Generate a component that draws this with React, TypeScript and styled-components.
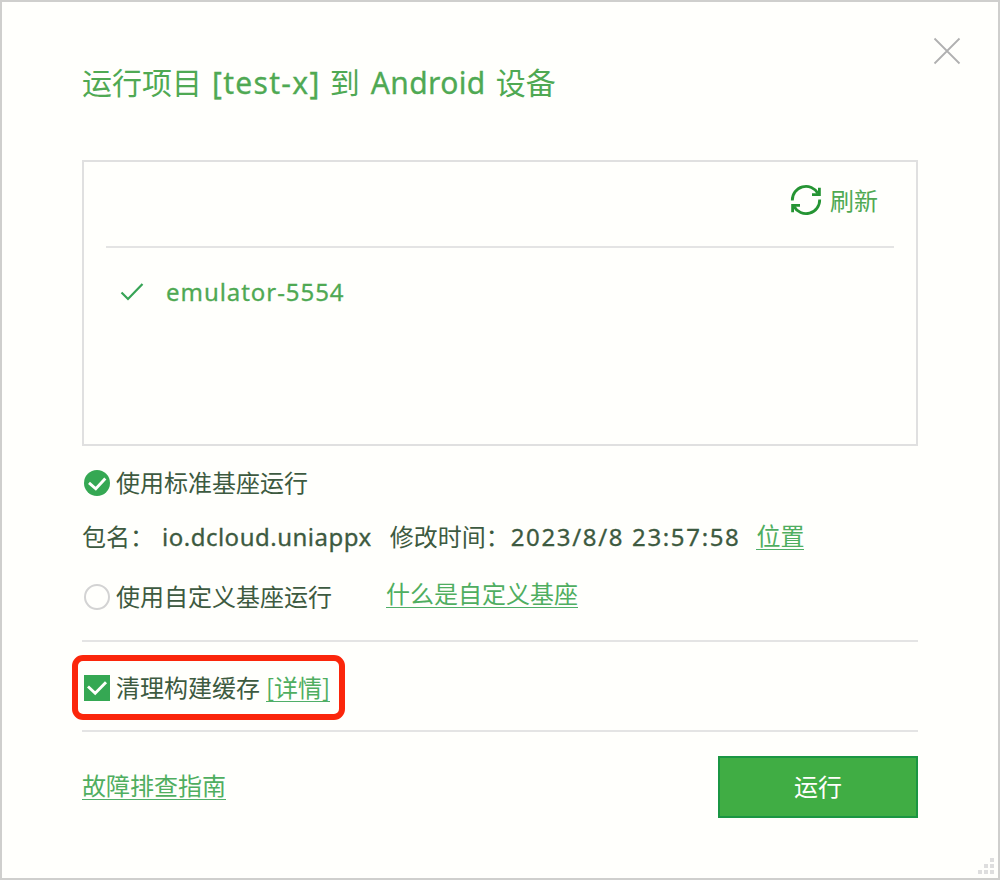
import React from "react";
import styled, { createGlobalStyle } from "styled-components";

const Global = createGlobalStyle`
  * { box-sizing: border-box; }
  body { margin: 0; background: #fffffc; }
`;

const Dialog = styled.div`
  position: relative;
  width: 1000px;
  height: 880px;
  padding: 57px 80px 0;
  border: 2px solid #cfcfcd;
  background: #fffffc;
  color: #3d5a40;
  font: 24px/34px "Noto Sans CJK SC", sans-serif;
  white-space: nowrap;
`;

const Latin = styled.span<{ $size?: number; $track?: number; $gap?: number; $drop?: number }>`
  font-family: "Noto Sans", "Noto Sans CJK SC", sans-serif;
  font-size: ${(p) => p.$size ?? 24}px;
  letter-spacing: ${(p) => p.$track ?? 0}px;
  margin-left: ${(p) => p.$gap ?? 0}px;
  margin-top: ${(p) => p.$drop ?? 0}px;
  -webkit-text-stroke: 0.3px currentColor;
`;

const Title = styled.h1`
  display: flex;
  align-items: baseline;
  height: 44px;
  margin: 0;
  font-size: 30px;
  line-height: 44px;
  font-weight: 400;
  color: #4fa953;
`;

const Word = styled.span<{ $gap: number }>`
  margin-left: ${(p) => p.$gap}px;
`;

const CloseButton = styled.button`
  position: absolute;
  top: 35px;
  right: 37px;
  width: 28px;
  height: 28px;
  padding: 0;
  border: 0;
  background: none;
  svg { display: block; }
`;

const DeviceBox = styled.section`
  height: 286px;
  margin-top: 57px;
  padding: 0 22px;
  border: 2px solid #e0e0e0;
`;

const Toolbar = styled.div`
  display: flex;
  justify-content: flex-end;
  align-items: center;
  height: 86px;
  padding: 0 16px 8px 0;
  border-bottom: 2px solid #e4e4e4;
  color: #4fa953;
`;

const Refresh = styled.button`
  display: flex;
  align-items: center;
  gap: 8px;
  padding: 0;
  border: 0;
  background: none;
  color: inherit;
  font: inherit;
`;

const Device = styled.div`
  display: flex;
  align-items: center;
  height: 88px;
  padding-left: 14px;
  color: #4fa953;
`;

const Row = styled.div<{ $height: number; $top?: number }>`
  display: flex;
  align-items: center;
  height: ${(p) => p.$height}px;
  margin-top: ${(p) => p.$top ?? 0}px;
`;

const Mark = styled.span<{ $drop?: number }>`
  display: flex;
  width: 26px;
  height: 26px;
  margin: ${(p) => p.$drop ?? 0}px 6px 0 2px;
`;

const Link = styled.a<{ $gap?: number; $lift?: number; $drop?: number }>`
  height: 28px;
  margin-left: ${(p) => p.$gap ?? 0}px;
  margin-top: ${(p) => p.$drop ?? 0}px;
  margin-bottom: ${(p) => p.$lift ?? 0}px;
  border-bottom: 1px solid #4fae68;
  line-height: 26px;
  color: #4fae60;
`;

const CacheSection = styled.div`
  display: flex;
  align-items: center;
  height: 92px;
  margin-top: 26px;
  border-top: 2px solid #e4e4e4;
  border-bottom: 2px solid #e4e4e4;
`;

const Highlight = styled.div`
  display: flex;
  align-items: center;
  width: 273px;
  height: 65px;
  margin: 2px 0 0 -10px;
  padding-left: 4px;
  border: 6px solid #fb260b;
  border-radius: 11px;
`;

const Footer = styled.footer`
  display: flex;
  justify-content: space-between;
  align-items: center;
  height: 62px;
  margin-top: 24px;
`;

const RunButton = styled.button`
  width: 200px;
  height: 62px;
  padding: 0 0 2px;
  border: 2px solid #1b9643;
  background: #40ad44;
  color: #fffffc;
  font: inherit;
`;

const Grip = styled.svg`
  position: absolute;
  right: 4px;
  bottom: 4px;
`;

function CheckGlyph({ round }: { round?: boolean }) {
  return (
    <svg width="26" height="26" viewBox="0 0 26 26">
      {round ? <circle cx="13" cy="13" r="13" fill="#35a853" /> : <rect width="26" height="26" fill="#35a853" />}
      <path
        d={round ? "M5 12.8 L11.8 18.8 L21.3 8.6" : "M4 11.5 L11.2 18.2 L22 7.2"}
        fill="none"
        stroke="#fffffc"
        strokeWidth="2.9"
      />
    </svg>
  );
}

export default function App() {
  return (
    <>
      <Global />
      <Dialog>
        <CloseButton aria-label="关闭">
          <svg width="28" height="28" viewBox="0 0 28 28">
            <path d="M1.5 1.5 L26.5 26.5 M26.5 1.5 L1.5 26.5" stroke="#b0b0b0" strokeWidth="1.8" />
          </svg>
        </CloseButton>
        <Title>
          <span>运行项目</span>
          <Latin $size={30} $track={1.3} $gap={10}>[test-x]</Latin>
          <Word $gap={9}>到</Word>
          <Latin $size={30} $track={0.4} $gap={11}>Android</Latin>
          <Word $gap={10}>设备</Word>
        </Title>

        <DeviceBox>
          <Toolbar>
            <Refresh>
              <svg width="32" height="32" viewBox="0 0 32 32" fill="none" stroke="#259433" strokeWidth="2.8">
                <path d="M2.3 16.5 A13.7 13.7 0 0 1 28 9.5 M29.7 15.5 A13.7 13.7 0 0 1 4 22.5" />
                <path d="M29.4 3.8 V10.6 H22 M2.6 28.2 V21.4 H10" />
              </svg>
              刷新
            </Refresh>
          </Toolbar>
          <Device>
            <svg width="24" height="20" viewBox="0 0 24 20">
              <path d="M1.5 10.5 L8 17 L22.5 2" fill="none" stroke="#37a456" strokeWidth="2.2" />
            </svg>
            <Latin $gap={22} $track={0.95}>emulator-5554</Latin>
          </Device>
        </DeviceBox>

        <Row $height={36} $top={18}>
          <Mark $drop={2}><CheckGlyph round /></Mark>
          使用标准基座运行
        </Row>
        <Row $height={36} $top={18}>
          <span>包名：</span>
          <Latin $gap={8} $track={0.5} $drop={2}>io.dcloud.uniappx</Latin>
          <Word $gap={18}>修改时间：</Word>
          <Latin $gap={1} $track={1.65} $drop={2}>2023/8/8 23:57:58</Latin>
          <Link $gap={16}>位置</Link>
        </Row>
        <Row $height={36} $top={24}>
          <Mark $drop={2}>
            <svg width="26" height="26" viewBox="0 0 26 26">
              <circle cx="13" cy="13" r="12" fill="none" stroke="#d3d3d3" strokeWidth="2" />
            </svg>
          </Mark>
          使用自定义基座运行
          <Link $gap={54} $lift={4}>什么是自定义基座</Link>
        </Row>

        <CacheSection>
          <Highlight>
            <Mark $drop={2}><CheckGlyph /></Mark>
            清理构建缓存
            <Link $gap={6} $drop={2}>[详情]</Link>
          </Highlight>
        </CacheSection>

        <Footer>
          <Link $lift={2}>故障排查指南</Link>
          <RunButton>运行</RunButton>
        </Footer>
        <Grip width="16" height="16" viewBox="0 0 16 16" fill="#dedede">
          <path d="M12 0h4v4h-4z M6 6h4v4h-4z M12 6h4v4h-4z M0 12h4v4h-4z M6 12h4v4h-4z M12 12h4v4h-4z" />
        </Grip>
      </Dialog>
    </>
  );
}
